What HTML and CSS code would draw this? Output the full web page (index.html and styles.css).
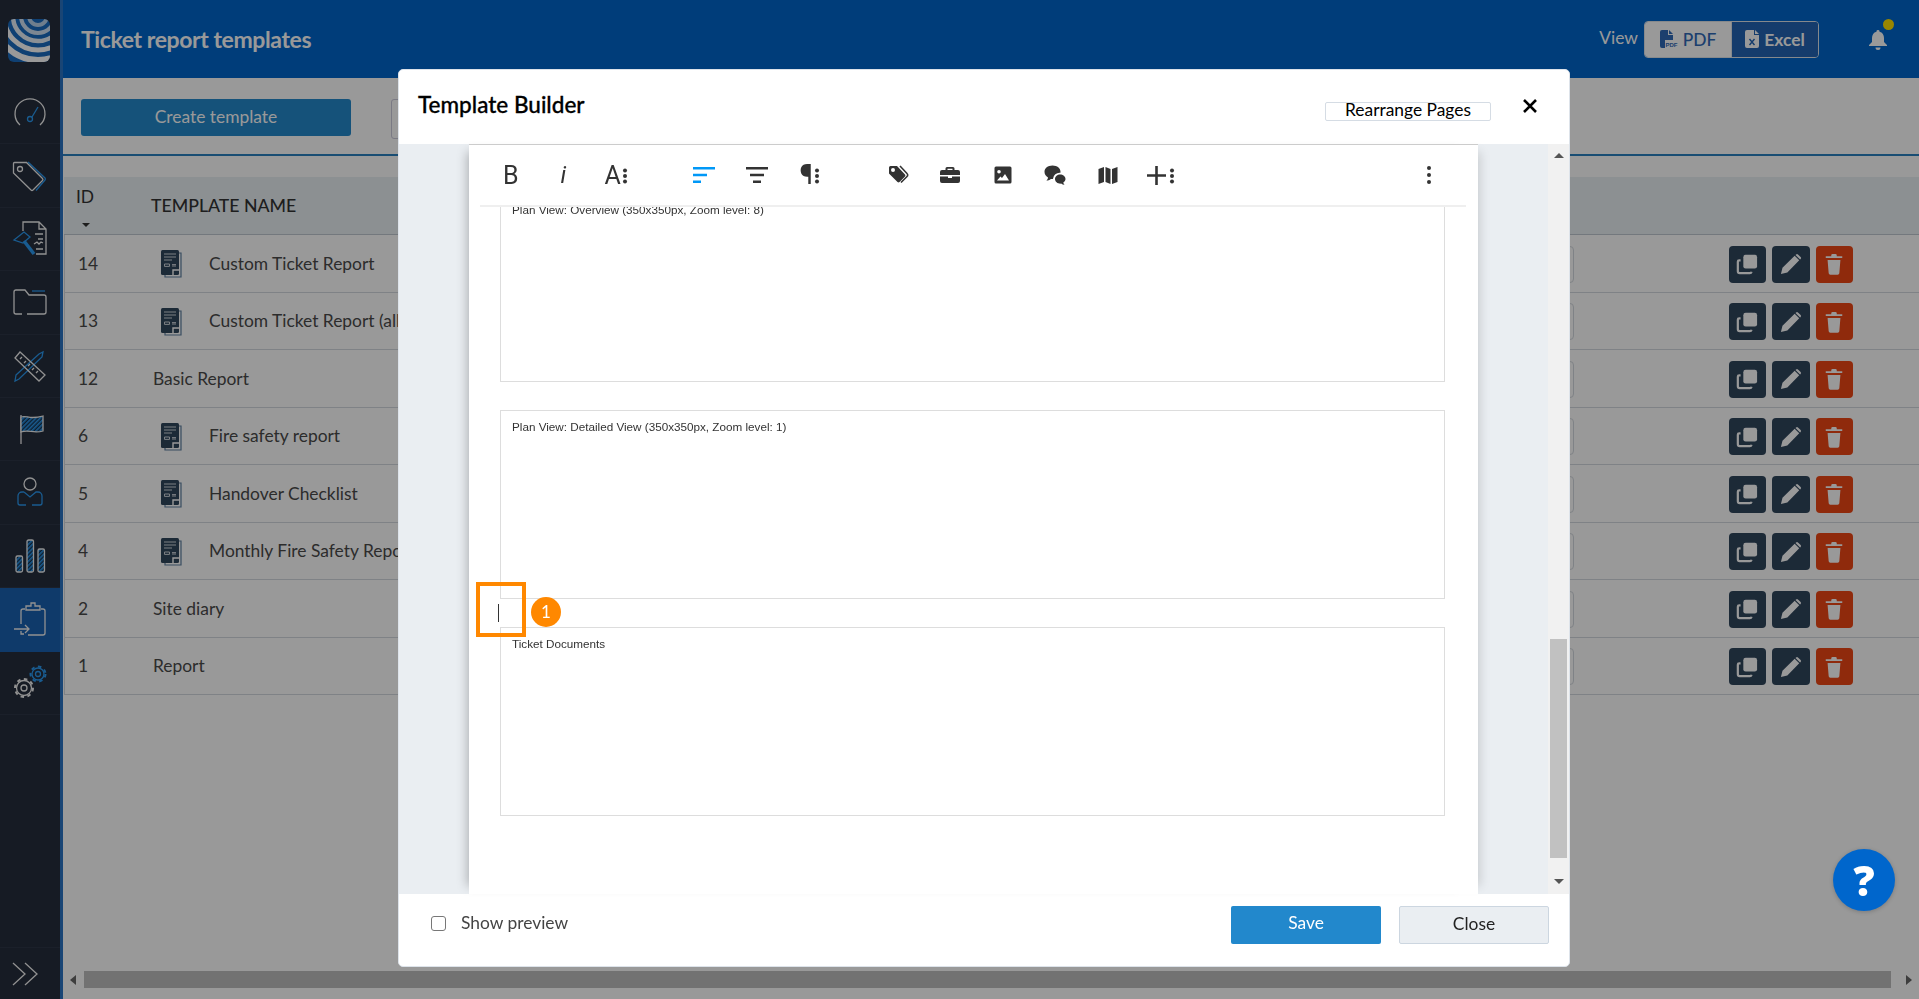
FILE: index.html
```html
<!DOCTYPE html>
<html>
<head>
<title>Ticket report templates</title>
<link rel="stylesheet" href="styles.css">
</head>
<body>

<svg class="defs" width="0" height="0">
	<defs>
		<pattern id="hatch" width="3" height="3" patternUnits="userSpaceOnUse" patternTransform="rotate(45)">
			<rect width="3" height="3" fill="#16324d"/>
			<rect width="1.6" height="3" fill="#2b99f0"/>
		</pattern>
		<symbol id="doc" viewBox="0 0 22 28">
			<path d="M18 3h3v24H5v-2" fill="none" stroke="#5d7fa0" stroke-width="1.2"/>
			<rect x="1" y="0" width="18" height="25" rx="1.5" fill="#2f465d"/>
			<path d="M4 4h12M4 7h12M4 10h8" stroke="#d0d6dc" stroke-width="1.2"/>
			<path d="M4.500 14h5v2.400h-5zM12 14.600h4M12 16h4" fill="none" stroke="#d0d6dc" stroke-width="1"/>
			<path d="M13 25v-5h6" fill="none" stroke="#fff" stroke-width="1.4"/>
		</symbol>
		<symbol id="copy" viewBox="0 0 24 24">
			<rect x="8" y="2" width="15" height="15" rx="2.5" fill="#fff"/>
			<path d="M5 8H3.500A1.500 1.500 0 0 0 2 9.500V20a2 2 0 0 0 2 2h11a2 2 0 0 0 2-1.500" fill="none" stroke="#fff" stroke-width="2.400"/>
		</symbol>
		<symbol id="pencil" viewBox="0 0 24 24">
			<path d="M1 23l1.700-7L16 3l5 5-13 13.300zM17.500 1.500a1.500 1.500 0 0 1 2.100 0l2.900 2.900a1.500 1.500 0 0 1 0 2.100l-.6.600-5-5z" fill="#fff"/>
		</symbol>
		<symbol id="trash" viewBox="0 0 24 24">
			<path d="M3 3.500h18V5.500H3zM9 3.500V2.500A1.500 1.500 0 0 1 10.500 1h3A1.500 1.500 0 0 1 15 2.500v1zM5 7.500h14l-1.200 14.700a1.800 1.800 0 0 1-1.800 1.600H8a1.800 1.800 0 0 1-1.800-1.600z" fill="#fff"/>
		</symbol>
	</defs>
</svg>

<div class="app">
	<div class="side">
		<div class="side-logo">
			<svg width="42" height="43" viewBox="0 0 42 43">
				<clipPath id="logoclip"><rect width="42" height="43" rx="6"/></clipPath>
				<g clip-path="url(#logoclip)">
					<rect width="42" height="43" fill="#1a6cc0"/>
					<g fill="none" stroke="#fff">
						<circle cx="30" cy="-3" r="9" stroke-width="4" opacity=".7"/>
						<circle cx="30" cy="-3" r="17" stroke-width="4" opacity=".8"/>
						<circle cx="30" cy="-3" r="25" stroke-width="4.500" opacity=".9"/>
						<circle cx="30" cy="-3" r="34" stroke-width="5"/>
						<circle cx="30" cy="-3" r="44" stroke-width="6"/>
					</g>
				</g>
			</svg>
		</div>
		<div class="side-item">
			<svg class="nav-icon" viewBox="0 0 40 40">
				<path d="M10 33a15 15 0 1 1 20 0"/>
				<g class="ac"><circle cx="20" cy="27" r="2.500"/><path d="M22 25l6-10"/></g>
			</svg>
		</div>
		<div class="side-item">
			<svg class="nav-icon" viewBox="0 0 40 40">
				<path d="M3.500 7.500a1 1 0 0 1 1-1h12l16 16a1.500 1.500 0 0 1 0 2L23 34a1.500 1.500 0 0 1-2 0L3.500 17z"/>
				<circle cx="10" cy="13" r="2.500"/>
				<path class="ac" d="M18 6l17 16a1.500 1.500 0 0 1 0 2L26 34.500"/>
			</svg>
		</div>
		<div class="side-item">
			<svg class="nav-icon" viewBox="0 0 40 40">
				<path d="M13 12V3h16l7 7v25H26M29 3v7h7M25 15h8M28 20h5M24 25l3-2 2 2 2-2 2 1M26 30h7"/>
				<g class="ac"><path d="M4 21l10-8 6 5-7 6z"/><path d="M14 22l10 13" stroke-width="3.500"/></g>
			</svg>
		</div>
		<div class="side-item">
			<svg class="nav-icon" viewBox="0 0 40 40">
				<path d="M12 32H6a2 2 0 0 1-2-2V10a2 2 0 0 1 2-2h9l4 5h15a2 2 0 0 1 2 2v15a2 2 0 0 1-2 2H17"/>
				<path class="ac" d="M22 9h13"/>
			</svg>
		</div>
		<div class="side-item">
			<svg class="nav-icon" viewBox="0 0 40 40">
				<g class="ac"><path d="M6 29L29 8l4-2-1 5L9 33l-4 2z"/></g>
				<path d="M5 12l5-6 25 23-6 6zM10 13l2-2M14 17l2-2M18 20l2-2M22 24l2-2M26 27l2-2"/>
			</svg>
		</div>
		<div class="side-item">
			<svg class="nav-icon" viewBox="0 0 40 40">
				<path d="M11 6v29"/>
				<path d="M11 8c6-2 8 3 22-1v15c-10 3-14-2-22 1z" fill="url(#hatch)"/>
			</svg>
		</div>
		<div class="side-item">
			<svg class="nav-icon" viewBox="0 0 40 40">
				<circle cx="20" cy="11" r="6"/>
				<path class="ac" d="M14 19h-2a4 4 0 0 0-4 4v7a2 2 0 0 0 2 2h6M14 19l6 5 6-5h2a4 4 0 0 1 4 4v7a2 2 0 0 1-2 2h-8"/>
			</svg>
		</div>
		<div class="side-item">
			<svg class="nav-icon" viewBox="0 0 40 40">
				<rect x="6" y="20" width="6.500" height="16" rx="1.500" fill="url(#hatch)"/>
				<rect x="17" y="4" width="6.500" height="32" rx="1.500" fill="url(#hatch)"/>
				<rect x="28" y="13" width="6.500" height="23" rx="1.500" fill="url(#hatch)"/>
			</svg>
		</div>
		<div class="side-item side-active">
			<svg class="nav-icon" viewBox="0 0 40 40">
				<path d="M15 9h-2a2 2 0 0 0-2 2v13M31 9h2a2 2 0 0 1 2 2v22a2 2 0 0 1-2 2H18M16 10V6h5V3h4v3h5v4zM11 31v3h3"/>
				<path d="M4 29h15M15 25l4 4-4 4"/>
			</svg>
		</div>
		<div class="side-item">
			<svg class="nav-icon" viewBox="0 0 40 40">
				<circle cx="14" cy="25" r="3"/>
				<circle cx="14" cy="25" r="7.500"/>
				<circle class="gear-teeth" cx="14" cy="25" r="9"/>
				<g class="ac">
					<circle cx="28" cy="11" r="2.500"/>
					<circle cx="28" cy="11" r="6"/>
					<circle class="gear-teeth" cx="28" cy="11" r="7.500"/>
				</g>
			</svg>
		</div>
		<div class="side-bottom">
			<svg class="nav-icon" viewBox="0 0 40 40"><path d="M3 9l12 11L3 31M15 9l12 11-12 11"/></svg>
		</div>
	</div>

	<div class="main">
		<div class="topbar">
			<div class="page-title">Ticket report templates</div>
			<div class="view-label">View</div>
			<div class="view-toggle">
				<div class="view-btn view-on">
					<svg width="18" height="19" viewBox="0 0 18 19">
						<path d="M0 2a2 2 0 0 1 2-2h6v5h5v5H5v8H2a2 2 0 0 1-2-2zM9 0l4 4H9z" fill="#2f69b7"/>
						<text class="pdf-mini" x="5.500" y="17">PDF</text>
					</svg>
					PDF
				</div>
				<div class="view-btn view-off">
					<svg width="14" height="18" viewBox="0 0 14 18"><path d="M2 0h7v5h5v11a2 2 0 0 1-2 2H2a2 2 0 0 1-2-2V2a2 2 0 0 1 2-2zM10 0l4 4h-4z" fill="#fff"/><path d="M4.500 9l5 6M9.500 9l-5 6" stroke="#2364b4" stroke-width="1.400"/></svg>
					Excel
				</div>
			</div>
			<div class="bell">
				<svg width="18" height="20" viewBox="0 0 18 20"><path d="M9 0a1.500 1.500 0 0 1 1.500 1.700C13.500 2.400 15 5 15 8v4l3 3v1H0v-1l3-3V8c0-3 1.500-5.600 4.500-6.300A1.500 1.500 0 0 1 9 0zM6.500 17.500h5A2.500 2.500 0 0 1 9 20a2.500 2.500 0 0 1-2.500-2.500z" fill="#fff"/></svg>
				<span class="bell-dot"></span>
			</div>
		</div>

		<div class="actions">
			<div class="btn-create">Create template</div>
			<div class="btn-other"></div>
		</div>

		<div class="table">
			<div class="thead">
				<div class="th-id">ID<span class="sort-caret"></span></div>
				<div class="th-name">TEMPLATE NAME</div>
			</div>

			<div class="row">
				<div class="row-id">14</div>
				<svg class="row-doc"><use href="#doc"/></svg>
				<div class="row-name">Custom Ticket Report</div>
				<div class="row-pill"></div>
				<div class="btn-icon"><svg><use href="#copy"/></svg></div>
				<div class="btn-icon"><svg><use href="#pencil"/></svg></div>
				<div class="btn-icon btn-del"><svg><use href="#trash"/></svg></div>
			</div>
			<div class="row">
				<div class="row-id">13</div>
				<svg class="row-doc"><use href="#doc"/></svg>
				<div class="row-name">Custom Ticket Report (all)</div>
				<div class="row-pill"></div>
				<div class="btn-icon"><svg><use href="#copy"/></svg></div>
				<div class="btn-icon"><svg><use href="#pencil"/></svg></div>
				<div class="btn-icon btn-del"><svg><use href="#trash"/></svg></div>
			</div>
			<div class="row">
				<div class="row-id">12</div>
				<div class="row-name">Basic Report</div>
				<div class="row-pill"></div>
				<div class="btn-icon"><svg><use href="#copy"/></svg></div>
				<div class="btn-icon"><svg><use href="#pencil"/></svg></div>
				<div class="btn-icon btn-del"><svg><use href="#trash"/></svg></div>
			</div>
			<div class="row">
				<div class="row-id">6</div>
				<svg class="row-doc"><use href="#doc"/></svg>
				<div class="row-name">Fire safety report</div>
				<div class="row-pill"></div>
				<div class="btn-icon"><svg><use href="#copy"/></svg></div>
				<div class="btn-icon"><svg><use href="#pencil"/></svg></div>
				<div class="btn-icon btn-del"><svg><use href="#trash"/></svg></div>
			</div>
			<div class="row">
				<div class="row-id">5</div>
				<svg class="row-doc"><use href="#doc"/></svg>
				<div class="row-name">Handover Checklist</div>
				<div class="row-pill"></div>
				<div class="btn-icon"><svg><use href="#copy"/></svg></div>
				<div class="btn-icon"><svg><use href="#pencil"/></svg></div>
				<div class="btn-icon btn-del"><svg><use href="#trash"/></svg></div>
			</div>
			<div class="row">
				<div class="row-id">4</div>
				<svg class="row-doc"><use href="#doc"/></svg>
				<div class="row-name">Monthly Fire Safety Report</div>
				<div class="row-pill"></div>
				<div class="btn-icon"><svg><use href="#copy"/></svg></div>
				<div class="btn-icon"><svg><use href="#pencil"/></svg></div>
				<div class="btn-icon btn-del"><svg><use href="#trash"/></svg></div>
			</div>
			<div class="row">
				<div class="row-id">2</div>
				<div class="row-name">Site diary</div>
				<div class="row-pill"></div>
				<div class="btn-icon"><svg><use href="#copy"/></svg></div>
				<div class="btn-icon"><svg><use href="#pencil"/></svg></div>
				<div class="btn-icon btn-del"><svg><use href="#trash"/></svg></div>
			</div>
			<div class="row">
				<div class="row-id">1</div>
				<div class="row-name">Report</div>
				<div class="row-pill"></div>
				<div class="btn-icon"><svg><use href="#copy"/></svg></div>
				<div class="btn-icon"><svg><use href="#pencil"/></svg></div>
				<div class="btn-icon btn-del"><svg><use href="#trash"/></svg></div>
			</div>
		</div>

		<div class="hscroll">
			<span class="arrow-left"></span>
			<div class="hscroll-thumb"></div>
			<span class="arrow-right"></span>
		</div>
	</div>
</div>

<div class="overlay"></div>

<div class="modal">
	<div class="modal-head">
		<div class="modal-title">Template Builder</div>
		<div class="btn-rearrange">Rearrange Pages</div>
		<svg class="modal-x" width="16" height="16" viewBox="0 0 16 16"><path d="M2 2l12 12M14 2L2 14" stroke="#000" stroke-width="2.600"/></svg>
	</div>

	<div class="modal-body">
		<div class="page">
			<div class="tools">
				<div class="tool-group">
					<div class="tool tool-b">B</div>
					<div class="tool tool-i">i</div>
					<div class="tool tool-a">A<span class="dots"></span></div>
				</div>
				<div class="tool-group tool-gap">
					<div class="tool">
						<svg width="24" height="24" viewBox="0 0 24 24"><path d="M1 4h22v2.400H1zM1 10.800h14v2.400H1zM1 17.600h8V20H1z" fill="#0098f7"/></svg>
					</div>
					<div class="tool">
						<svg width="24" height="24" viewBox="0 0 24 24"><path d="M1 4h22v2.400H1zM5 10.800h14v2.400H5zM8 17.600h8V20H8z" fill="#333"/></svg>
					</div>
					<div class="tool tool-p">¶<span class="dots"></span></div>
				</div>
				<div class="tool-group tool-gap">
					<div class="tool">
						<svg width="22" height="22" viewBox="0 0 22 22"><path d="M2 3.500A1.500 1.500 0 0 1 3.500 2H10l8 8.500a1.500 1.500 0 0 1 0 2L12.500 18a1.500 1.500 0 0 1-2 0L2 9.500zM6 8a2 2 0 1 0 0-4 2 2 0 0 0 0 4z" fill="#333" fill-rule="evenodd"/><path d="M13 2l7 7.500a2 2 0 0 1 0 3L14 18.500" fill="none" stroke="#333" stroke-width="1.600"/></svg>
					</div>
					<div class="tool">
						<svg width="20" height="20" viewBox="0 0 20 20"><path d="M7 2h6a1.500 1.500 0 0 1 1.500 1.500V5H18a2 2 0 0 1 2 2v3H0V7a2 2 0 0 1 2-2h3.500V3.500A1.500 1.500 0 0 1 7 2zm.5 1.800V5h5V3.800zM0 11.500h8V13h4v-1.500h8V16a2 2 0 0 1-2 2H2a2 2 0 0 1-2-2z" fill="#333" fill-rule="evenodd"/></svg>
					</div>
					<div class="tool">
						<svg width="20" height="20" viewBox="0 0 20 20"><path d="M3 1.500h14A1.500 1.500 0 0 1 18.500 3v14a1.500 1.500 0 0 1-1.500 1.500H3A1.500 1.500 0 0 1 1.500 17V3A1.500 1.500 0 0 1 3 1.500zM6 5a1.800 1.800 0 1 0 0 3.600A1.800 1.800 0 0 0 6 5zM4 15.500h12L12 9l-3 4-1.500-1.500z" fill="#333" fill-rule="evenodd"/></svg>
					</div>
					<div class="tool">
						<svg width="24" height="22" viewBox="0 0 24 22"><path d="M9.500 1.500c4.700 0 8 2.900 8 6.200 0 .4 0 .7-.1 1a6.800 6.800 0 0 0-7.500 6.300c-.7.100-1.300 0-2-.1-1.300 1.100-3 1.700-4.600 1.700 1-.9 1.600-2 1.700-3.200C2.700 12 1.500 10 1.500 7.700c0-3.300 3.300-6.200 8-6.200z" fill="#333"/><path d="M17 10.500c3 0 5.500 2 5.500 4.500 0 1.500-.9 2.700-2.200 3.500.1.900.6 1.700 1.300 2.300-1.300 0-2.500-.4-3.500-1.200-.2 0-.4.100-.6.100-3 0-5.500-2-5.500-4.700 0-2.500 2.500-4.500 5-4.500z" fill="#333"/></svg>
					</div>
					<div class="tool">
						<svg width="22" height="22" viewBox="0 0 22 22"><path d="M1.500 5l5.500-2v15l-5.500 2zM8.500 3l5 2v15l-5-2zM15 5l5.500-2v15L15 20z" fill="#333"/></svg>
					</div>
					<div class="tool tool-plus">
						<svg width="19" height="19" viewBox="0 0 19 19"><path d="M8.200 0h2.600v8.200H19v2.600h-8.200V19H8.200v-8.200H0V8.200h8.200z" fill="#333"/></svg>
						<span class="dots"></span>
					</div>
				</div>
				<div class="tool tool-more"><span class="dots dots-big"></span></div>
			</div>

			<div class="sheet">
				<div class="field field-first">Plan View: Overview (350x350px, Zoom level: 8)</div>
				<div class="gap-line"></div>
				<div class="field">Plan View: Detailed View (350x350px, Zoom level: 1)</div>
				<div class="gap-line gap-caret"><span class="caret"></span></div>
				<div class="field">Ticket Documents</div>
			</div>
		</div>

		<div class="vscroll">
			<span class="arrow-up"></span>
			<div class="vscroll-thumb"></div>
			<span class="arrow-down"></span>
		</div>

		<div class="hl-box"></div>
		<div class="hl-badge">1</div>
	</div>

	<div class="modal-foot">
		<label class="show-preview"><span class="check"></span>Show preview</label>
		<div class="btn-save">Save</div>
		<div class="btn-close">Close</div>
	</div>
</div>

<div class="help">?</div>

</body>
</html>
```

FILE: styles.css
```css
html, body {
	margin: 0;
	height: 999px;
	overflow: hidden;
	background: #fff;
	font-family: Lato, "Open Sans", sans-serif;
	font-size: 17.4px;
	color: #4a4a4a;
}
.defs {
	position: absolute;
}
.app {
	display: flex;
	height: 999px;
}

/* left nav */
.side {
	width: 60px;
	flex: none;
	border-right: 3px solid #2a74c4;
	background: #252d3c;
	display: flex;
	flex-direction: column;
}
.side-logo {
	padding: 19px 0 0 8px;
	box-sizing: border-box;
	height: 81px;
}
.side-item {
	height: 63.4px;
	box-sizing: border-box;
	border-bottom: 1px solid #2e3646;
	display: flex;
	align-items: center;
	justify-content: center;
}
.side-active {
	background: #1a61b1;
	border-bottom: 0;
}
.side-bottom {
	margin-top: auto;
	height: 51px;
	border-top: 1px solid #2e3646;
	display: flex;
	align-items: center;
	justify-content: center;
}
.nav-icon {
	width: 40px;
	height: 40px;
	fill: none;
	stroke: #f2f2f2;
	stroke-width: 1.3;
}
.nav-icon .ac {
	stroke: #2b99f0;
}
.gear-teeth {
	stroke-width: 2;
	stroke-dasharray: 3.500 3.500;
}

/* main */
.main {
	flex: 1;
	min-width: 0;
	display: flex;
	flex-direction: column;
}
.topbar {
	height: 78px;
	flex: none;
	background: #0066cc;
	display: flex;
	align-items: center;
	padding: 0 0 0 18px;
	color: #fff;
}
.page-title {
	font-size: 23px;
	font-weight: 700;
	letter-spacing: -0.4px;
}
.view-label {
	margin-left: auto;
	font-size: 17.4px;
	margin-top: -4px;
}
.view-toggle {
	display: flex;
	height: 37px;
	margin-left: 6px;
	border: 1px solid #dfe4ea;
	border-radius: 4px;
	box-sizing: border-box;
	overflow: hidden;
	font-weight: 500;
}
.view-btn {
	display: flex;
	align-items: center;
	justify-content: center;
	gap: 5px;
}
.view-on {
	width: 86px;
	background: #fff;
	color: #2f69b7;
	border-right: 1px solid #dfe4ea;
}
.view-off {
	width: 86px;
	background: #2364b4;
	font-weight: 700;
}
.pdf-mini {
	font-family: "Liberation Sans", sans-serif;
	font-size: 6px;
	font-weight: 700;
	fill: #2f69b7;
}
.bell {
	position: relative;
	margin-left: 50px;
	margin-right: 32px;
	display: flex;
	margin-top: 2px;
}
.bell-dot {
	position: absolute;
	top: -11px;
	left: 14px;
	width: 11px;
	height: 11px;
	border-radius: 50%;
	background: #ffe000;
}

.actions {
	height: 78px;
	flex: none;
	box-sizing: border-box;
	padding: 21px 0 0 18px;
	display: flex;
	gap: 40px;
	border-bottom: 2px solid #2a80c0;
}
.btn-create {
	width: 270px;
	height: 37px;
	line-height: 35px;
	text-align: center;
	background: #2389cc;
	color: #fff;
	border-radius: 3px;
}
.btn-other {
	width: 140px;
	height: 40px;
	box-sizing: border-box;
	border: 1px solid #ccd;
	border-radius: 3px;
}

/* template table */
.table {
	flex: 1;
	min-height: 0;
	margin: 21px 0 0 1px;
}
.thead {
	height: 58px;
	background: #e9f0f3;
	display: flex;
	border-bottom: 1px solid #c0c8d0;
	box-sizing: border-box;
	color: #333;
}
.th-id {
	width: 87px;
	padding: 9px 0 0 12px;
	box-sizing: border-box;
	position: relative;
}
.sort-caret {
	position: absolute;
	left: 18px;
	top: 46px;
	border: 4px solid transparent;
	border-top: 4px solid #333;
	border-bottom: 0;
}
.th-name {
	padding-top: 18px;
	font-size: 17.700px;
	font-weight: 500;
}
.row {
	height: 57.5px;
	box-sizing: border-box;
	display: flex;
	align-items: center;
	padding-left: 13px;
	border-bottom: 1px solid #d4d9e0;
	border-left: 1px solid #d4d9e0;
}
.row-id {
	width: 75px;
	flex: none;
}
.row-doc {
	width: 22px;
	height: 28px;
	flex: none;
	margin: 2px 27px 0 7px;
}
.row-name {
	white-space: nowrap;
}
.row-pill {
	margin-left: auto;
	margin-right: 155px;
	width: 100px;
	height: 37px;
	box-sizing: border-box;
	border: 1px solid #d4d9e0;
	border-radius: 4px;
	margin-top: 2px;
}
.btn-icon {
	width: 37.500px;
	height: 37px;
	flex: none;
	margin-right: 6px;
	margin-top: 2px;
	border-radius: 4px;
	background: #2f465d;
	display: flex;
	align-items: center;
	justify-content: center;
}
.btn-icon svg {
	width: 22px;
	height: 22px;
}
.btn-del {
	background: #ee4714;
	margin-right: 66px;
}
.hscroll {
	height: 17px;
	flex: none;
	margin-bottom: 11px;
	display: flex;
	align-items: center;
}
.hscroll-thumb {
	flex: 1;
	height: 17px;
	background: #bebebe;
	margin: 0 15px 0 8px;
}
.arrow-left {
	margin-left: 7px;
	border: 5px solid transparent;
	border-right: 6px solid #666;
	border-left: 0;
}
.arrow-right {
	margin-right: 7px;
	border: 5px solid transparent;
	border-left: 6px solid #666;
	border-right: 0;
}

.overlay {
	position: fixed;
	left: 0;
	top: 0;
	right: 0;
	bottom: 0;
	background: rgba(0, 0, 0, 0.4);
}

/* modal */
.modal {
	position: fixed;
	left: 398px;
	top: 69px;
	width: 1172px;
	height: 898px;
	box-sizing: border-box;
	background: #fff;
	border-radius: 5px;
	border: 1px solid #dde3ea;
	display: flex;
	flex-direction: column;
	color: #000;
}
.modal-head {
	height: 74px;
	flex: none;
	display: flex;
	align-items: center;
	padding-left: 19px;
}
.modal-title {
	font-size: 22.500px;
	font-weight: 500;
	-webkit-text-stroke: 0.3px #000;
	margin-top: -5px;
}
.btn-rearrange {
	margin-left: auto;
	width: 166px;
	height: 19px;
	line-height: 14px;
	box-sizing: border-box;
	border: 1px solid #d5dce4;
	border-radius: 2px;
	text-align: center;
	margin-top: 8px;
}
.modal-x {
	margin: -2px 31px 0 31px;
}
.modal-body {
	position: relative;
	flex: 1;
	min-height: 0;
	display: flex;
	background: #eaeef2;
}
.page {
	width: 1009px;
	margin-left: 70px;
	background: #fff;
	border-top: 1px solid #ccc;
	box-shadow: -10px 0 10px -8px rgba(0, 0, 0, 0.25), 10px 0 10px -8px rgba(0, 0, 0, 0.15);
	display: flex;
	flex-direction: column;
	overflow: hidden;
}
.tools {
	height: 60px;
	flex: none;
	display: flex;
	align-items: center;
	margin: 0 12px 0 11px;
	padding-left: 4.500px;
	border-bottom: 2px solid #efefef;
	color: #333;
	font-family: Roboto, sans-serif;
}
.tool-group {
	display: flex;
}
.tool-gap {
	margin-left: 36px;
}
.tool {
	width: 52.500px;
	height: 40px;
	display: flex;
	align-items: center;
	justify-content: center;
}
.tool-b {
	font-size: 25px;
}
.tool-i {
	font-size: 24px;
	font-style: italic;
}
.tool-a {
	font-size: 25px;
}
.tool-p {
	font-size: 27px;
}
.tool-plus {
	gap: 2px;
}
.tool-more {
	margin-left: auto;
	margin-right: 11px;
}
.dots {
	width: 4px;
	height: 4px;
	border-radius: 50%;
	background: #333;
	box-shadow: 0 5.500px 0 #333, 0 -5.500px 0 #333;
	margin-left: 2px;
	margin-top: 2px;
}
.dots-big {
	margin: 0;
	box-shadow: 0 7px 0 #333, 0 -7px 0 #333;
}
.sheet {
	padding: 0 33px 0 31px;
	font-family: "Liberation Sans", Arial, sans-serif;
	font-size: 11.700px;
	color: #333;
	overflow: hidden;
}
.field {
	height: 189px;
	box-sizing: border-box;
	border: 1px solid #ddd;
	padding: 9px 11px;
}
.field-first {
	margin-top: -14px;
}
.gap-line {
	height: 28px;
}
.gap-caret {
	position: relative;
}
.caret {
	position: absolute;
	left: -2px;
	top: 5px;
	width: 1px;
	height: 18px;
	background: #333;
}
.vscroll {
	position: absolute;
	right: 0;
	top: 0;
	bottom: 0;
	width: 21px;
	background: #f1f1f1;
	display: flex;
	flex-direction: column;
	align-items: center;
}
.vscroll-thumb {
	width: 17px;
	height: 219px;
	margin-top: auto;
	margin-bottom: 21px;
	background: #c1c1c1;
}
.arrow-up {
	margin-top: 9px;
	border: 5px solid transparent;
	border-bottom: 5px solid #555;
	border-top: 0;
}
.arrow-down {
	margin-bottom: 10px;
	border: 5px solid transparent;
	border-top: 5px solid #555;
	border-bottom: 0;
}
.hl-box {
	position: absolute;
	left: 77px;
	top: 438px;
	width: 50px;
	height: 55px;
	box-sizing: border-box;
	border: 4.500px solid #ff8800;
}
.hl-badge {
	position: absolute;
	left: 132px;
	top: 453px;
	width: 30px;
	height: 30px;
	line-height: 30px;
	border-radius: 50%;
	background: #ff8800;
	color: #fff;
	font-size: 17px;
	text-align: center;
}
.modal-foot {
	height: 72px;
	flex: none;
	display: flex;
	align-items: flex-start;
	padding: 12px 0 0 32px;
	box-sizing: border-box;
}
.show-preview {
	display: flex;
	align-items: center;
	gap: 15px;
	color: #444;
	margin-right: auto;
	margin-top: 6px;
}
.check {
	width: 15px;
	height: 15px;
	box-sizing: border-box;
	border: 1px solid #777;
	border-radius: 3px;
	margin-top: 2px;
}
.btn-save, .btn-close {
	width: 150px;
	height: 38px;
	line-height: 34px;
	box-sizing: border-box;
	text-align: center;
	border-radius: 2px;
}
.btn-save {
	background: #2288cc;
	color: #fff;
	margin-right: 18px;
}
.btn-close {
	background: #eaeef2;
	border: 1px solid #ccd6e0;
	margin-right: 20px;
	color: #222;
}

.help {
	position: fixed;
	left: 1833px;
	top: 849px;
	width: 62px;
	height: 62px;
	border-radius: 50%;
	background: #0066cc;
	color: #fff;
	font-family: "Open Sans", sans-serif;
	font-weight: 800;
	font-size: 42px;
	line-height: 62px;
	text-align: center;
	box-shadow: 0 1px 4px rgba(0, 0, 0, 0.2);
}
```
